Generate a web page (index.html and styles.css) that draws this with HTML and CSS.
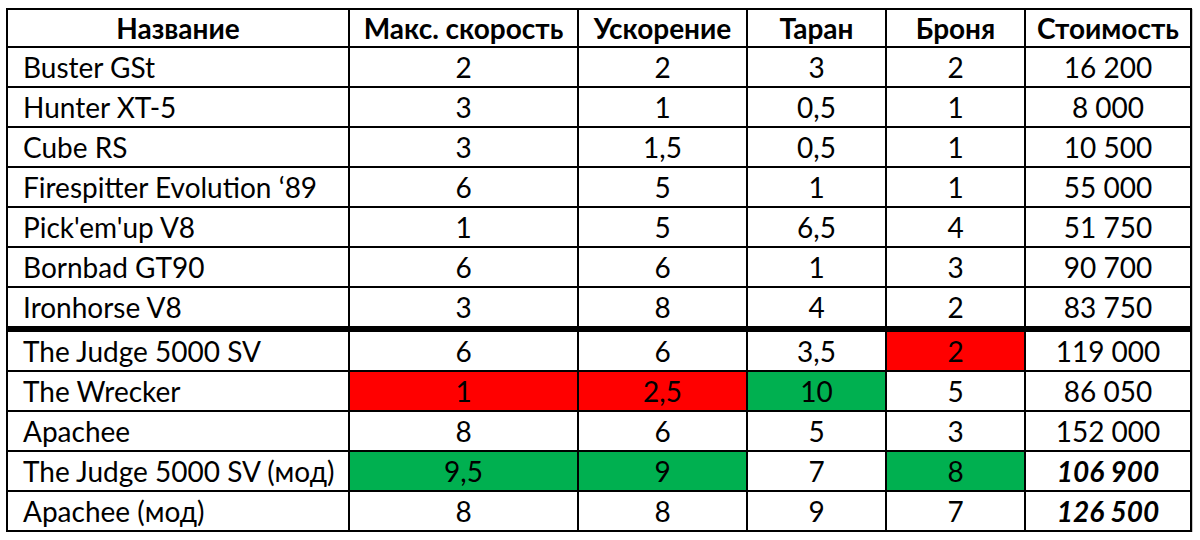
FILE: index.html
```html
<!DOCTYPE html>
<html lang="ru">
<head>
<meta charset="utf-8">
<title>Машины</title>
<link rel="stylesheet" href="styles.css">
</head>
<body>
<table class="cars">
  <colgroup>
    <col class="c-name">
    <col class="c-speed">
    <col class="c-acc">
    <col class="c-ram">
    <col class="c-armor">
    <col class="c-cost">
  </colgroup>
  <thead>
    <tr>
      <th>Название</th>
      <th>Макс. скорость</th>
      <th>Ускорение</th>
      <th>Таран</th>
      <th>Броня</th>
      <th>Стоимость</th>
    </tr>
  </thead>
  <tbody>
    <tr><td class="name">Buster GSt</td><td>2</td><td>2</td><td>3</td><td>2</td><td>16 200</td></tr>
    <tr><td class="name">Hunter XT-5</td><td>3</td><td>1</td><td>0,5</td><td>1</td><td>8 000</td></tr>
    <tr><td class="name">Cube RS</td><td>3</td><td>1,5</td><td>0,5</td><td>1</td><td>10 500</td></tr>
    <tr><td class="name">Firespitter Evolution ‘89</td><td>6</td><td>5</td><td>1</td><td>1</td><td>55 000</td></tr>
    <tr><td class="name">Pick'em'up V8</td><td>1</td><td>5</td><td>6,5</td><td>4</td><td>51 750</td></tr>
    <tr><td class="name">Bornbad GT90</td><td>6</td><td>6</td><td>1</td><td>3</td><td>90 700</td></tr>
    <tr class="last-base"><td class="name">Ironhorse V8</td><td>3</td><td>8</td><td>4</td><td>2</td><td>83 750</td></tr>
    <tr><td class="name">The Judge 5000 SV</td><td>6</td><td>6</td><td>3,5</td><td class="bad">2</td><td>119 000</td></tr>
    <tr><td class="name">The Wrecker</td><td class="bad">1</td><td class="bad">2,5</td><td class="good">10</td><td>5</td><td>86 050</td></tr>
    <tr><td class="name">Apachee</td><td>8</td><td>6</td><td>5</td><td>3</td><td>152 000</td></tr>
    <tr><td class="name">The Judge 5000 SV (мод)</td><td class="good">9,5</td><td class="good">9</td><td>7</td><td class="good">8</td><td class="best">106 900</td></tr>
    <tr><td class="name">Apachee (мод)</td><td>8</td><td>8</td><td>9</td><td>7</td><td class="best">126 500</td></tr>
  </tbody>
</table>
</body>
</html>
```

FILE: styles.css
```css
html, body {
  margin: 0;
  padding: 0;
  background: #ffffff;
}

body {
  padding: 8px 0 0 6px;
  font-family: Lato, "Open Sans", "Liberation Sans", sans-serif;
  color: #000000;
}

.cars {
  border-collapse: collapse;
  table-layout: fixed;
  width: 1186px;
  font-size: 28px;
  line-height: 1;
  box-shadow: 1px 1px 0 #c8c8c8;
}

.c-name { width: 342px; }
.c-speed { width: 229px; }
.c-acc { width: 169px; }
.c-ram { width: 139px; }
.c-armor { width: 139px; }
.c-cost { width: 166px; }

.cars th,
.cars td {
  border: 2px solid #000000;
  height: 38px;
  padding: 0;
  text-align: center;
  vertical-align: middle;
  white-space: nowrap;
  overflow: hidden;
}

.cars th {
  height: 36px;
  font-weight: 700;
}

.cars td.name {
  text-align: left;
  padding-left: 15px;
}

.cars tr.last-base td {
  border-bottom: 6px solid #000000;
}

.cars td.bad {
  background: #ff0000;
}

.cars td.good {
  background: #00b050;
}

.cars td.best {
  font-weight: 700;
  font-style: italic;
}
```
